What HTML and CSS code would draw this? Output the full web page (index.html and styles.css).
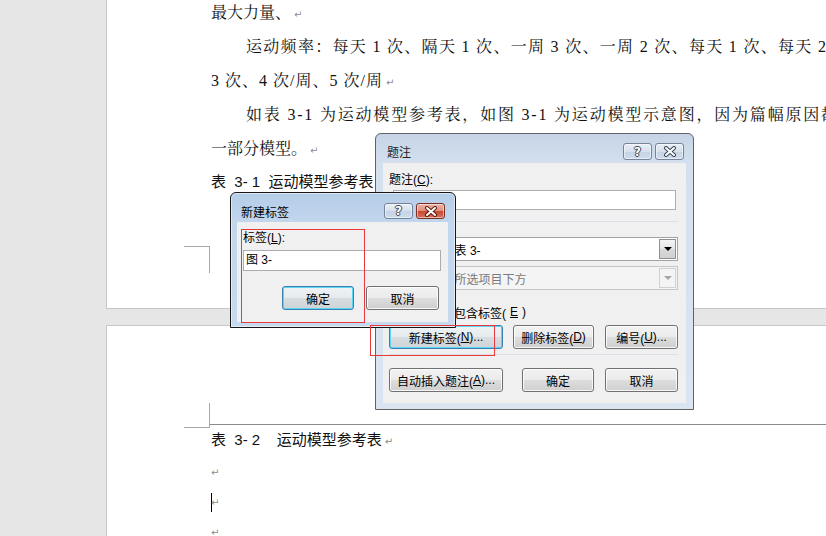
FILE: index.html
```html
<!DOCTYPE html>
<html lang="zh-CN">
<head>
  <meta charset="UTF-8">
  <title>题注 - 新建标签</title>
  <link rel="stylesheet" href="styles.css">
</head>
<body>
  <div class="workspace">
    <div class="page page-first">
      <div class="doc-text">
        <p class="line">最大力量、<span class="ret">↵</span></p>
        <p class="line indent just">运动频率：每天 1 次、隔天 1 次、一周 3 次、一周 2 次、每天 1 次、每天 2</p>
        <p class="line spaced">3 次、4 次/周、5 次/周<span class="ret">↵</span></p>
        <p class="line indent just wider">如表 3-1 为运动模型参考表，如图 3-1 为运动模型示意图，因为篇幅原因都</p>
        <p class="line">一部分模型。<span class="ret">↵</span></p>
        <p class="caption">表&nbsp;&nbsp;3-&nbsp;1&nbsp;&nbsp;运动模型参考表</p>
      </div>
      <div class="crop-mark crop-end"></div>
    </div>

    <div class="page page-second">
      <div class="table-edge">
        <div class="crop-mark crop-start"></div>
        <div class="table-rule"></div>
      </div>
      <div class="doc-text">
        <p class="caption caption-next">表&nbsp;&nbsp;3-&nbsp;2&nbsp;&nbsp;&nbsp;&nbsp;运动模型参考表<span class="ret">↵</span></p>
        <div class="empty-lines">
          <p class="empty"><span class="ret">↵</span></p>
          <p class="empty"><span class="caret"></span><span class="ret">↵</span></p>
          <p class="empty"><span class="ret">↵</span></p>
        </div>
      </div>
    </div>
  </div>

  <!-- 题注 dialog (inactive) -->
  <div class="window caption-window">
    <div class="titlebar">
      <span class="title">题注</span>
      <div class="cap-buttons">
        <span class="cap-btn help">?</span>
        <span class="cap-btn close">
          <svg width="14" height="11" viewBox="0 0 14 11">
            <path d="M3 2 L11 9 M11 2 L3 9" stroke="#3b4654" stroke-width="4" stroke-linecap="round"/>
            <path d="M3 2 L11 9 M11 2 L3 9" stroke="#fff" stroke-width="2" stroke-linecap="round"/>
          </svg>
        </span>
      </div>
    </div>
    <div class="client caption-client">
      <div class="field-label">题注(<u>C</u>):</div>
      <div class="textbox caption-text"></div>
      <div class="group-rule"><span>选项</span><span class="rule-line"></span></div>
      <div class="option-row">
        <span class="opt-label">标签(<u>L</u>):</span>
        <div class="combo">
          <span class="combo-value">表 3-</span>
          <span class="combo-arrow"><span class="tri"></span></span>
        </div>
      </div>
      <div class="option-row second">
        <span class="opt-label muted">位置(<u>P</u>):</span>
        <div class="combo disabled">
          <span class="combo-value">所选项目下方</span>
          <span class="combo-arrow"><span class="tri"></span></span>
        </div>
      </div>
      <div class="check-row"><span class="checkbox"></span>题注中不包含标签(<u>E</u>)</div>
      <div class="button-row top-row">
        <span class="btn wide focus">新建标签(<u>N</u>)...</span>
        <span class="btn mid">删除标签(<u>D</u>)</span>
        <span class="btn narrow">编号(<u>U</u>)...</span>
      </div>
      <div class="rule"></div>
      <div class="button-row bottom-row">
        <span class="btn wide">自动插入题注(<u>A</u>)...</span>
        <span class="btn ok">确定</span>
        <span class="btn narrow">取消</span>
      </div>
    </div>
  </div>

  <!-- 新建标签 dialog (active) -->
  <div class="window label-window">
    <div class="titlebar">
      <span class="title">新建标签</span>
      <div class="cap-buttons">
        <span class="cap-btn help">?</span>
        <span class="cap-btn close active">
          <svg width="14" height="11" viewBox="0 0 14 11">
            <path d="M3 2 L11 9 M11 2 L3 9" stroke="#5a1b10" stroke-width="4" stroke-linecap="round"/>
            <path d="M3 2 L11 9 M11 2 L3 9" stroke="#fff" stroke-width="2" stroke-linecap="round"/>
          </svg>
        </span>
      </div>
    </div>
    <div class="client label-client">
      <div class="field-label">标签(<u>L</u>):</div>
      <div class="textbox label-text">图 3-</div>
      <div class="button-row end-row">
        <span class="btn ok focus">确定</span>
        <span class="btn narrow">取消</span>
      </div>
    </div>
  </div>

  <div class="annot annot-label"></div>
  <div class="annot annot-new"></div>
</body>
</html>
```

FILE: styles.css
```css
body {
  margin: 0;
  width: 826px;
  height: 536px;
  overflow: hidden;
  position: relative;
  background-color: #e6e6e6;
}

/* document pages */
.workspace {
  padding-left: 106px;
}

.page {
  background-color: #fff;
  border-left: 1px solid #c6c6c6;
  display: flow-root;
}

.page-first {
  height: 309px;
  box-sizing: border-box;
  border-bottom: 1px solid #c6c6c6;
}

.page-second {
  margin-top: 16px;
  height: 230px;
  border-top: 1px solid #c6c6c6;
}

.doc-text {
  padding-left: 104px;
  font-family: "Liberation Serif", "Noto Serif CJK SC", "Noto Sans CJK SC", serif;
  font-size: 16px;
  color: #111;
  white-space: nowrap;
}

.page-first .doc-text {
  margin-top: -4px;
}

.line {
  margin: 0;
  height: 34px;
  line-height: 34px;
}

.indent { padding-left: 35px; }
.just { letter-spacing: 1.3px; }
.just.wider { letter-spacing: 1.8px; }
.spaced { letter-spacing: 1px; }

.caption {
  margin: 0;
  height: 32px;
  font-family: "Liberation Sans", "Noto Sans CJK SC", sans-serif;
  font-size: 15px;
  line-height: 32px;
}

.caption-next {
  height: 24px;
  line-height: 24px;
}

.ret {
  font-family: "DejaVu Sans", sans-serif;
  font-size: 10px;
  color: #8c8c8c;
  margin-left: 3px;
  letter-spacing: 0;
}

.empty-lines {
  margin-top: 4px;
}

.empty {
  margin: 0;
  height: 30px;
  line-height: 30px;
}

.empty .ret {
  margin-left: 0;
}

.caret {
  display: inline-block;
  width: 1px;
  height: 19px;
  margin-right: -1px;
  background-color: #000;
  vertical-align: middle;
}

.crop-mark {
  width: 25px;
  border-color: #a8a8a8;
  border-style: solid;
  border-width: 0;
}

.crop-end {
  margin: 48px 0 0 77px;
  height: 26px;
  border-top-width: 1px;
  border-right-width: 1px;
}

.table-edge {
  display: flex;
  align-items: flex-start;
  margin: 77px 0 0 77px;
}

.crop-start {
  height: 24px;
  border-bottom-width: 1px;
  border-right-width: 1px;
}

.table-rule {
  flex: 1;
  height: 21px;
  border-bottom: 1px solid #8c8c8c;
}

/* dialog windows */
.window {
  position: absolute;
  box-sizing: border-box;
  border-radius: 6px 6px 0 0;
  font-family: "Liberation Sans", "Noto Sans CJK SC", sans-serif;
  font-size: 12px;
  color: #000;
}

.caption-window {
  left: 375px;
  top: 133px;
  width: 319px;
  height: 277px;
  padding: 0 7px 6px;
  border: 1px solid #626262;
  background: linear-gradient(#c5d4e6, #d4e0ee 30px, #dae5f1);
}

.label-window {
  left: 230px;
  top: 192px;
  width: 226px;
  height: 136px;
  padding: 0 7px 5px 6px;
  border: 1px solid #161616;
  background: linear-gradient(#b6cde8, #c2d6ed 30px, #c6d9ee);
  box-shadow: inset 0 0 0 1px rgba(255, 255, 255, 0.55);
}

.titlebar {
  height: 29px;
  box-sizing: border-box;
  display: flex;
  align-items: center;
  justify-content: space-between;
}

.caption-window .titlebar {
  margin: 0 -7px;
  padding: 6px 9px 0 11px;
}

.label-window .titlebar {
  margin: 0 -7px 0 -6px;
  padding: 7px 10px 0 10px;
}

.title {
  font-size: 12px;
}

.caption-window .title {
  color: #222;
}

.cap-buttons {
  display: flex;
  gap: 3px;
}

.cap-btn {
  width: 29px;
  height: 17px;
  box-sizing: border-box;
  display: flex;
  align-items: center;
  justify-content: center;
  border: 1px solid #75849a;
  border-radius: 3px;
  background: linear-gradient(#e8eef6, #d6e1ee 50%, #c4d3e5 51%, #cfdcec);
  box-shadow: inset 0 0 0 1px rgba(255, 255, 255, 0.5);
}

.label-window .cap-btn {
  height: 16px;
}

.cap-btn.help {
  font-family: "DejaVu Sans", sans-serif;
  font-weight: bold;
  font-size: 12px;
  color: #fff;
  text-shadow: 1px 0 #3b4654, -1px 0 #3b4654, 0 1px #3b4654, 0 -1px #3b4654;
}

.cap-btn.close.active {
  border-color: #7a2f22;
  background: linear-gradient(#eab4a7, #dc8f7d 50%, #c7472e 51%, #d4735f);
}

.client {
  box-sizing: border-box;
  background-color: #f0f0f0;
}

.caption-client {
  height: 240px;
  padding: 9px 8px 0 6px;
}

.label-client {
  height: 100px;
  padding: 8px 8px 0 6px;
}

.field-label {
  height: 16px;
  line-height: 16px;
}

.textbox {
  box-sizing: border-box;
  border: 1px solid #abadb3;
  background-color: #fff;
}

.caption-text {
  height: 20px;
  width: 283px;
  margin: 2px 0 0 4px;
}

.label-text {
  height: 21px;
  width: 198px;
  margin-top: 4px;
  padding-left: 2px;
  line-height: 19px;
  font-size: 12px;
}

.group-rule {
  display: flex;
  align-items: center;
  gap: 4px;
  height: 16px;
  margin-top: 3px;
}

.rule-line {
  flex: 1;
  height: 1px;
  background-color: #d9dfe6;
}

.option-row {
  display: flex;
  align-items: center;
  margin-top: 8px;
}

.option-row.second {
  margin-top: 5px;
}

.opt-label {
  width: 61px;
}

.muted {
  color: #8a8a8a;
}

.combo {
  width: 230px;
  height: 24px;
  box-sizing: border-box;
  display: flex;
  align-items: center;
  padding: 0 1px 0 4px;
  border: 1px solid #a3a3a3;
  background-color: #fff;
}

.combo.disabled {
  background-color: #f4f4f4;
  border-color: #c6c6c6;
  color: #7a7a7a;
}

.combo-arrow {
  margin-left: auto;
  width: 17px;
  height: 20px;
  box-sizing: border-box;
  display: flex;
  align-items: center;
  justify-content: center;
  border: 1px solid #8e8f8f;
  background: linear-gradient(#f4f4f4, #e6e6e6 50%, #d9d9d9 51%, #d0d0d0);
}

.combo.disabled .combo-arrow {
  border-color: #d2d2d2;
  background: #f4f4f4;
}

.tri {
  width: 0;
  height: 0;
  border-left: 4px solid transparent;
  border-right: 4px solid transparent;
  border-top: 4px solid #000;
}

.combo.disabled .tri {
  border-top-color: #a6a6a6;
}

.check-row {
  display: flex;
  align-items: center;
  gap: 4px;
  height: 16px;
  margin-top: 14px;
}

.checkbox {
  width: 13px;
  height: 13px;
  box-sizing: border-box;
  border: 1px solid #8f8f8f;
  background: linear-gradient(135deg, #dcdcdc, #fff);
}

.button-row {
  display: flex;
}

.top-row {
  margin-top: 5px;
  gap: 10px;
}

.top-row .narrow {
  margin-left: 1px;
}

.bottom-row {
  margin-top: 13px;
}

.bottom-row .ok {
  margin-left: 19px;
}

.bottom-row .narrow {
  margin-left: 11px;
}

.end-row {
  margin-top: 15px;
  justify-content: flex-end;
  gap: 12px;
  padding-right: 1px;
}

.rule {
  height: 1px;
  margin-top: 5px;
  background-color: #d9dfe6;
}

.btn {
  height: 24px;
  box-sizing: border-box;
  display: flex;
  align-items: center;
  justify-content: center;
  border: 1px solid #707070;
  border-radius: 3px;
  background: linear-gradient(#f2f2f2, #ebebeb 48%, #dddddd 52%, #cfcfcf);
  box-shadow: inset 0 0 0 1px rgba(255, 255, 255, 0.8);
  white-space: nowrap;
}

.btn.focus {
  border-color: #3c7fb1;
  box-shadow: inset 0 0 0 1px #5bd4f6;
  background: linear-gradient(#eef3f6, #e6ebee 48%, #d8dde0 52%, #cdd3d6);
}

.btn.wide { width: 114px; }
.btn.mid { width: 81px; }
.btn.ok { width: 72px; }
.btn.narrow { width: 73px; }

/* red annotation frames drawn over the screenshot */
.annot {
  position: absolute;
  box-sizing: border-box;
  border: 1px solid #e8393c;
}

.annot-label {
  left: 241px;
  top: 229px;
  width: 124px;
  height: 94px;
}

.annot-new {
  left: 370px;
  top: 325px;
  width: 125px;
  height: 31px;
}
```
